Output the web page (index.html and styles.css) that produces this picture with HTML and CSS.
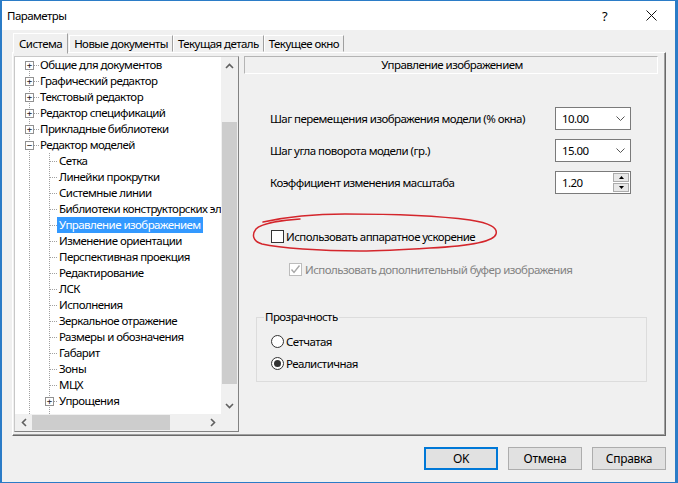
FILE: index.html
```html
<!DOCTYPE html>
<html lang="ru">
<head>
<meta charset="utf-8">
<title>Параметры</title>
<link rel="stylesheet" href="styles.css">
</head>
<body>
<div class="window">
  <div class="titlebar">
    <span class="title">Параметры</span>
    <span class="help">?</span>
    <span class="close"><svg width="11" height="11" viewBox="0 0 11 11"><path d="M0.5 0.5 L10.5 10.5 M10.5 0.5 L0.5 10.5" stroke="#111" stroke-width="1" fill="none"/></svg></span>
  </div>
  <div class="client">
    <div class="tabs">
      <div class="tab active">Система</div>
      <div class="tab">Новые документы</div>
      <div class="tab">Текущая деталь</div>
      <div class="tab">Текущее окно</div>
    </div>
    <div class="panel">
      <div class="tree">
        <div class="tree-body">
          <div class="tree-list">
            <div class="row l1"><span class="exp">+</span><span class="hl"></span><span class="lbl">Общие для документов</span></div>
            <div class="row l1"><span class="exp">+</span><span class="hl"></span><span class="lbl">Графический редактор</span></div>
            <div class="row l1"><span class="exp">+</span><span class="hl"></span><span class="lbl">Текстовый редактор</span></div>
            <div class="row l1"><span class="exp">+</span><span class="hl"></span><span class="lbl">Редактор спецификаций</span></div>
            <div class="row l1"><span class="exp">+</span><span class="hl"></span><span class="lbl">Прикладные библиотеки</span></div>
            <div class="row l1"><span class="exp">−</span><span class="hl"></span><span class="lbl">Редактор моделей</span></div>
            <div class="row l2"><span class="hl"></span><span class="lbl">Сетка</span></div>
            <div class="row l2"><span class="hl"></span><span class="lbl">Линейки прокрутки</span></div>
            <div class="row l2"><span class="hl"></span><span class="lbl">Системные линии</span></div>
            <div class="row l2"><span class="hl"></span><span class="lbl">Библиотеки конструкторских элементов</span></div>
            <div class="row l2"><span class="hl"></span><span class="lbl selected">Управление изображением</span></div>
            <div class="row l2"><span class="hl"></span><span class="lbl">Изменение ориентации</span></div>
            <div class="row l2"><span class="hl"></span><span class="lbl">Перспективная проекция</span></div>
            <div class="row l2"><span class="hl"></span><span class="lbl">Редактирование</span></div>
            <div class="row l2"><span class="hl"></span><span class="lbl">ЛСК</span></div>
            <div class="row l2"><span class="hl"></span><span class="lbl">Исполнения</span></div>
            <div class="row l2"><span class="hl"></span><span class="lbl">Зеркальное отражение</span></div>
            <div class="row l2"><span class="hl"></span><span class="lbl">Размеры и обозначения</span></div>
            <div class="row l2"><span class="hl"></span><span class="lbl">Габарит</span></div>
            <div class="row l2"><span class="hl"></span><span class="lbl">Зоны</span></div>
            <div class="row l2"><span class="hl"></span><span class="lbl">МЦХ</span></div>
            <div class="row l2 exp-row"><span class="exp">+</span><span class="hl short"></span><span class="lbl">Упрощения</span></div>
          </div>
          <div class="vscroll">
            <div class="sbtn"><svg width="9" height="6" viewBox="0 0 9 6"><polyline points="1,5 4.5,1.5 8,5" fill="none" stroke="#606060" stroke-width="1.6"/></svg></div>
            <div class="vtrack"><div class="vthumb"></div></div>
            <div class="sbtn"><svg width="9" height="6" viewBox="0 0 9 6"><polyline points="1,1 4.5,4.5 8,1" fill="none" stroke="#606060" stroke-width="1.6"/></svg></div>
          </div>
        </div>
        <div class="hscroll">
          <div class="sbtn"><svg width="6" height="9" viewBox="0 0 6 9"><polyline points="5,1 1.5,4.5 5,8" fill="none" stroke="#606060" stroke-width="1.6"/></svg></div>
          <div class="htrack"><div class="hthumb"></div></div>
          <div class="sbtn"><svg width="6" height="9" viewBox="0 0 6 9"><polyline points="1,1 4.5,4.5 1,8" fill="none" stroke="#606060" stroke-width="1.6"/></svg></div>
          <div class="corner"></div>
        </div>
      </div>
      <div class="page">
        <div class="page-head">Управление изображением</div>
        <div class="form">
          <div class="frow">
            <span class="flabel">Шаг перемещения изображения модели (% окна)</span>
            <div class="combo"><span class="val">10.00</span><svg class="chev" width="9" height="5" viewBox="0 0 9 5"><polyline points="0.5,0.5 4.5,4.5 8.5,0.5" fill="none" stroke="#555" stroke-width="1"/></svg></div>
          </div>
          <div class="frow">
            <span class="flabel">Шаг угла поворота модели (гр.)</span>
            <div class="combo"><span class="val">15.00</span><svg class="chev" width="9" height="5" viewBox="0 0 9 5"><polyline points="0.5,0.5 4.5,4.5 8.5,0.5" fill="none" stroke="#555" stroke-width="1"/></svg></div>
          </div>
          <div class="frow">
            <span class="flabel">Коэффициент изменения масштаба</span>
            <div class="combo spin"><span class="val">1.20</span>
              <div class="spinbtns">
                <div class="spb"><svg width="5" height="3" viewBox="0 0 5 3"><polygon points="0,3 2.5,0 5,3" fill="#000"/></svg></div>
                <div class="spb"><svg width="5" height="3" viewBox="0 0 5 3"><polygon points="0,0 2.5,3 5,0" fill="#000"/></svg></div>
              </div>
            </div>
          </div>
        </div>
        <div class="check c1"><span class="box"></span><span class="ctext">Использовать аппаратное ускорение</span></div>
        <div class="check c2 disabled"><span class="box"><svg width="11" height="11" viewBox="0 0 11 11"><polyline points="1.5,5.5 4,8.5 9.5,1.5" fill="none" stroke="#a8a8a8" stroke-width="1.4"/></svg></span><span class="ctext">Использовать дополнительный буфер изображения</span></div>
        <fieldset class="group">
          <legend>Прозрачность</legend>
          <div class="radio"><span class="dot"></span><span class="rtext">Сетчатая</span></div>
          <div class="radio on"><span class="dot"></span><span class="rtext">Реалистичная</span></div>
        </fieldset>
      </div>
    </div>
    <div class="buttons">
      <button class="btn default">OK</button>
      <button class="btn">Отмена</button>
      <button class="btn">Справка</button>
    </div>
  </div>
  <svg class="annotation" width="678" height="483" viewBox="0 0 678 483">
    <path d="M263,222 C290,216 320,214 345,214 C390,214 440,216 470,220 C490,223 498,228 496,234 C494,242 470,246 430,248 C400,250 380,251 360,251 C320,251 280,248 262,244 C252,241 252,234 256,229 C262,223 285,220 300,219" fill="none" stroke="#d4262c" stroke-width="1.5" stroke-linecap="round"/>
  </svg>
</div>
</body>
</html>
```

FILE: styles.css
```css
* { box-sizing: border-box; }
html, body { margin: 0; padding: 0; }
body {
  width: 678px;
  height: 483px;
  overflow: hidden;
  background: #f0f0f0;
  font-family: "Noto Sans", "Liberation Sans", sans-serif;
  font-size: 11.5px;
  letter-spacing: -0.55px;
  color: #000;
}
.window {
  position: relative;
  width: 678px;
  height: 483px;
  background: #f0f0f0;
  border-style: solid;
  border-color: #2b7cc7;
  border-width: 1px 3px 1px 2px;
}
.titlebar {
  height: 29px;
  background: #fff;
  display: flex;
  align-items: center;
}
.title { margin-left: 5px; }
.help { margin-left: auto; font-size: 13px; margin-right: 39px; }
.close { margin-right: 18px; display: flex; }

.client { padding: 3px 9px 0 10px; }

.tabs {
  display: flex;
  height: 19px;
  align-items: flex-start;
}
.tab {
  height: 17px;
  margin-top: 2px;
  padding: 0 4px;
  line-height: 15px;
  border: 1px solid;
  border-color: #fff #a0a0a0 transparent #fff;
  white-space: nowrap;
  background: #f0f0f0;
}
.tab.active {
  height: 21px;
  margin-top: 0;
  margin-left: 1px;
  padding: 0 5px 0 5px;
  line-height: 19px;
  position: relative;
  z-index: 1;
}
.tabs .tab:nth-child(2) { margin-left: 1px; }

.panel {
  display: flex;
  align-items: flex-start;
  height: 384px;
  border: 1px solid;
  border-color: #fff #696969 #696969 #fff;
  box-shadow: inset -1px -1px 0 #a0a0a0;
  padding: 3px 0 0 1px;
}

/* tree */
.tree {
  width: 225px;
  height: 376px;
  border: 1px solid;
  border-color: #c8c8c8 #828282 #828282 #c8c8c8;
  background: #fff;
  display: flex;
  flex-direction: column;
}
.tree-body { display: flex; height: 357px; }
.tree-list {
  position: relative;
  flex: 1;
  overflow: hidden;
}
.tree-list::before {
  content: "";
  position: absolute;
  left: 14px;
  top: 8px;
  bottom: 0;
  border-left: 1px dotted #a0a0a0;
}
.tree-list::after {
  content: "";
  position: absolute;
  left: 34px;
  top: 96px;
  bottom: 0;
  border-left: 1px dotted #a0a0a0;
}
.row {
  height: 16px;
  display: flex;
  align-items: center;
  white-space: nowrap;
  position: relative;
  z-index: 1;
}
.row.l1 { padding-left: 10px; }
.row.l2 { padding-left: 35px; }
.row.l2.exp-row { padding-left: 30px; }
.exp {
  width: 9px;
  height: 9px;
  border: 1px solid #919191;
  background: #fff;
  font-family: "DejaVu Sans Mono", monospace;
  font-size: 9px;
  letter-spacing: 0;
  line-height: 7px;
  text-align: center;
  color: #222;
  flex: none;
}
.hl {
  width: 5px;
  height: 1px;
  border-top: 1px dotted #a0a0a0;
  flex: none;
}
.row.l2 .hl { width: 7px; }
.row.l2 .hl.short { width: 3px; }
.lbl {
  padding: 0 2px 0 1px;
  line-height: 16px;
  height: 16px;
}
.row.l2 .lbl { padding-left: 2px; }
.lbl.selected { background: #3399ff; color: #fff; }

.sbtn {
  width: 17px;
  height: 17px;
  display: flex;
  align-items: center;
  justify-content: center;
  flex: none;
}
.vscroll {
  width: 17px;
  background: #f0f0f0;
  display: flex;
  flex-direction: column;
}
.vtrack { flex: 1; padding: 48px 1px 0 1px; }
.vthumb { height: 262px; background: #cdcdcd; }
.hscroll {
  height: 17px;
  display: flex;
  background: #f0f0f0;
}
.htrack { flex: 1; display: flex; align-items: stretch; }
.hthumb { width: 138px; margin: 1px 0; background: #cdcdcd; }
.corner { width: 17px; background: #f0f0f0; }

/* right page */
.page {
  margin-left: 5px;
  width: 414px;
  display: flex;
  flex-direction: column;
}
.page-head {
  height: 18px;
  border: 1px solid;
  border-color: #b4b4b4 #fff #fff #b4b4b4;
  text-align: center;
  line-height: 16px;
  padding-left: 2px;
}
.form {
  margin-top: 33px;
  display: flex;
  flex-direction: column;
  gap: 9px;
}
.frow {
  height: 23px;
  display: flex;
  align-items: center;
  padding-left: 26px;
  padding-right: 27px;
}
.flabel { flex: 1; white-space: nowrap; }
.combo {
  width: 76px;
  height: 23px;
  border: 1px solid #7a7a7a;
  background: #fff;
  display: flex;
  align-items: center;
  padding-left: 6px;
}
.combo .val { flex: 1; }
.combo .chev { margin-right: 5px; }
.spinbtns {
  display: flex;
  flex-direction: column;
  gap: 1px;
  margin-right: 1px;
}
.spb {
  width: 16px;
  height: 9px;
  border: 1px solid #acacac;
  background: #e8e8e8;
  display: flex;
  align-items: center;
  justify-content: center;
}

.check {
  display: flex;
  align-items: center;
  height: 16px;
  white-space: nowrap;
}
.check.c1 { margin-top: 34px; padding-left: 27px; }
.check.c2 { margin-top: 17px; padding-left: 45px; }
.check .box {
  width: 13px;
  height: 13px;
  border: 1px solid #333;
  background: #fff;
  display: flex;
  align-items: center;
  justify-content: center;
  flex: none;
}
.check .ctext { margin-left: 2px; }
.check.disabled .box { border-color: #bcbcbc; }
.check.disabled .ctext { color: #838383; margin-left: 3px; }

.group {
  margin: 32px 0 0 12px;
  width: 391px;
  border: 1px solid #dcdcdc;
  padding: 0 0 10px 7px;
  min-width: 0;
}
.group legend {
  padding: 0 1px;
  line-height: 16px;
  height: 16px;
}
.radio {
  display: flex;
  align-items: center;
  height: 16px;
  margin-left: 7px;
}
.radio + .radio { margin-top: 6px; }
.group legend + .radio { margin-top: 8px; }
.radio .dot {
  width: 13px;
  height: 13px;
  border: 1px solid #333;
  border-radius: 50%;
  background: #fff;
  display: flex;
  align-items: center;
  justify-content: center;
}
.radio.on .dot::after {
  content: "";
  width: 7px;
  height: 7px;
  border-radius: 50%;
  background: #333;
}
.radio .rtext { margin-left: 2px; }

.buttons {
  display: flex;
  justify-content: flex-end;
  gap: 10px;
  margin-top: 11px;
}
.btn {
  width: 74px;
  height: 23px;
  border: 1px solid #adadad;
  background: #e1e1e1;
  font-family: inherit;
  font-size: 12px;
  letter-spacing: -0.3px;
  color: #000;
  padding: 0;
}
.btn.default { border: 2px solid #0078d7; }

.annotation {
  position: absolute;
  left: -2px;
  top: -1px;
  pointer-events: none;
}
```
